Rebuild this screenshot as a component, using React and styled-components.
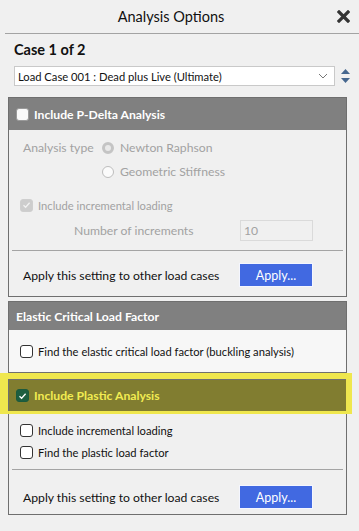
import React from 'react';
import styled, { createGlobalStyle } from 'styled-components';

const GlobalStyle = createGlobalStyle`
  html, body {
    margin: 0;
    padding: 0;
    background: #f0f0f0;
  }
  body {
    font-family: "Lato", "Open Sans", sans-serif;
    color: #111;
  }
`;

const Window = styled.div`
  width: 359px;
  height: 531px;
  background: #f0f0f0;
  overflow: hidden;
`;

const TitleBar = styled.div`
  display: flex;
  align-items: center;
  height: 34px;
  margin-left: 5px;
  border-bottom: 1px solid #a3a3a3;
  box-sizing: border-box;
`;

const Title = styled.div`
  flex: 1;
  text-align: center;
  font-size: 14.5px;
  color: #111;
`;

const CloseBtn = styled.div`
  width: 22px;
  display: flex;
  align-items: center;
  justify-content: flex-start;
`;

const CaseTitle = styled.div`
  font-size: 14.5px;
  font-weight: 700;
  margin: 5px 0 0 14px;
  height: 22px;
  line-height: 22px;
`;

const SelectRow = styled.div`
  display: flex;
  align-items: center;
  margin: 5px 0 0 14px;
  gap: 4px;
`;

const Select = styled.div`
  width: 321px;
  height: 20px;
  box-sizing: border-box;
  background: #fff;
  border: 1px solid #c9c9c9;
  display: flex;
  align-items: center;
  justify-content: space-between;
  padding: 0 6px 0 3px;
  font-size: 11.2px;
  color: #111;
`;

const Spinner = styled.div`
  display: flex;
  flex-direction: column;
  align-items: center;
  gap: 4px;
  width: 12px;
`;

const Panels = styled.div`
  display: flex;
  flex-direction: column;
  margin: 11px 12px 0 8px;
  gap: 4px;
`;

const Panel = styled.div`
  position: relative;
  margin-top: ${p => p.$mt || 0}px;
  border: 1px solid #6f6f6f;
  background: ${p => (p.$light ? '#f7f7f7' : '#f0f0f0')};
`;

const PanelHeader = styled.div`
  display: flex;
  align-items: center;
  gap: 5px;
  height: ${p => p.$h || 32}px;
  padding-left: 7px;
  background: ${p => (p.$hl ? '#817d30' : '#808080')};
  color: ${p => (p.$hl ? '#f2ec52' : '#fff')};
  font-size: 12.2px;
  font-weight: 700;
`;

const Highlight = styled.div`
  position: absolute;
  box-sizing: border-box;
  left: -9px;
  right: -6px;
  top: -7px;
  height: ${p => p.$h}px;
  border: solid #efe74e;
  border-width: 6px 6px 3px 8px;
  pointer-events: none;
`;

const PanelBody = styled.div`
  display: flex;
  flex-direction: column;
  padding: ${p => p.$pad || '0'};
`;

const TypeGrid = styled.div`
  display: grid;
  grid-template-columns: 79px auto;
  row-gap: 5px;
  align-items: center;
  padding: 8px 0 0 14px;
`;

const DimText = styled.span`
  font-size: ${p => p.$fs || 12.2}px;
  color: #a2a2a2;
  line-height: 19px;
`;

const RadioLabel = styled.label`
  display: flex;
  align-items: center;
  gap: 6px;
`;

const Radio = styled.span`
  width: 12px;
  height: 12px;
  box-sizing: border-box;
  border-radius: 50%;
  border: ${p => (p.$on ? '3px solid #c4c4c4' : '1px solid #bdbdbd')};
  background: ${p => (p.$on ? '#e9e9e9' : '#fbfbfb')};
`;

const CheckRow = styled.label`
  display: flex;
  align-items: center;
  gap: 5px;
  height: ${p => p.$h || 22}px;
  margin-top: ${p => p.$mt || 0}px;
  padding-left: 11px;
  font-size: 11.2px;
  color: #111;
`;

const Box = styled.span`
  width: 13px;
  height: 13px;
  box-sizing: border-box;
  border-radius: 3px;
  display: flex;
  align-items: center;
  justify-content: center;
  flex-shrink: 0;
  border: 1px solid ${p => p.$border || '#333'};
  background: ${p => p.$bg || '#fff'};
`;

const IncRow = styled.div`
  display: grid;
  grid-template-columns: 166px 73px;
  align-items: center;
  padding: 4px 0 0 65px;
`;

const NumInput = styled.div`
  height: 21px;
  box-sizing: border-box;
  border: 1px solid #dadada;
  background: #f0f0f0;
  font-size: 12.2px;
  color: #a2a2a2;
  padding-left: 3px;
  line-height: 19px;
`;

const Divider = styled.div`
  height: 1px;
  background: #a4a4a4;
  margin: ${p => p.$mt}px 3px 0 3px;
`;

const ApplyRow = styled.div`
  display: flex;
  align-items: center;
  justify-content: space-between;
  padding: ${p => p.$pt}px 33px ${p => p.$pb}px 14px;
  font-size: 12.2px;
  color: #111;
`;

const ApplyButton = styled.button`
  width: 74px;
  height: 24px;
  border: 1px solid #f4f6ff;
  background: #4169e1;
  color: #fff;
  font-family: "Lato", "Open Sans", sans-serif;
  font-size: 12.5px;
  padding: 0;
`;

const Check = ({ color = '#fff' }) => (
  <svg width="9" height="8" viewBox="0 0 9 8">
    <path d="M1.5 4.2 L3.6 6.2 L7.6 1.8" fill="none" stroke={color} strokeWidth="1.3" />
  </svg>
);

const App = () => (
  <Window>
    <GlobalStyle />
    <TitleBar>
      <Title>Analysis Options</Title>
      <CloseBtn>
        <svg width="13" height="13" viewBox="0 0 13 13">
          <path d="M2 2 L11 11 M11 2 L2 11" stroke="#333" strokeWidth="3.2" strokeLinecap="square" />
        </svg>
      </CloseBtn>
    </TitleBar>

    <CaseTitle>Case 1 of 2</CaseTitle>
    <SelectRow>
      <Select>
        <span>Load Case 001 : Dead plus Live (Ultimate)</span>
        <svg width="10" height="6" viewBox="0 0 10 6">
          <path d="M1 1 L5 5 L9 1" fill="none" stroke="#777" strokeWidth="1" />
        </svg>
      </Select>
      <Spinner>
        <svg width="9" height="5" viewBox="0 0 9 5">
          <path d="M0 5 L4.5 0 L9 5 Z" fill="#46678f" />
        </svg>
        <svg width="9" height="5" viewBox="0 0 9 5">
          <path d="M0 0 L4.5 5 L9 0 Z" fill="#46678f" />
        </svg>
      </Spinner>
    </SelectRow>

    <Panels>
      <Panel>
        <PanelHeader>
          <Box $border="#9a9a9a" $bg="#fafafa" />
          Include P-Delta Analysis
        </PanelHeader>
        <PanelBody>
          <TypeGrid>
            <DimText>Analysis type</DimText>
            <RadioLabel>
              <Radio $on />
              <DimText>Newton Raphson</DimText>
            </RadioLabel>
            <span />
            <RadioLabel>
              <Radio />
              <DimText>Geometric Stiffness</DimText>
            </RadioLabel>
          </TypeGrid>
          <CheckRow $h={22} $mt={13}>
            <Box $border="#cfcfcf" $bg="#cdcdcd">
              <Check color="#f2f2f2" />
            </Box>
            <DimText $fs={11.2}>Include incremental loading</DimText>
          </CheckRow>
          <IncRow>
            <DimText>Number of increments</DimText>
            <NumInput>10</NumInput>
          </IncRow>
          <Divider $mt={9} />
          <ApplyRow $pt={12} $pb={9}>
            <span>Apply this setting to other load cases</span>
            <ApplyButton>Apply...</ApplyButton>
          </ApplyRow>
        </PanelBody>
      </Panel>

      <Panel $light>
        <PanelHeader $h={28}>Elastic Critical Load Factor</PanelHeader>
        <PanelBody $pad="11px 0 10px 0">
          <CheckRow $h={21}>
            <Box />
            Find the elastic critical load factor (buckling analysis)
          </CheckRow>
        </PanelBody>
      </Panel>

      <Panel $mt={2}>
        <PanelHeader $hl $h={31}>
          <Box $border="#1c5a3c" $bg="#1e5e40">
            <Check />
          </Box>
          Include Plastic Analysis
        </PanelHeader>
        <Highlight $h={41} />
        <PanelBody $pad="8px 0 0 0">
          <CheckRow $h={22}>
            <Box />
            Include incremental loading
          </CheckRow>
          <CheckRow $h={22}>
            <Box />
            Find the plastic load factor
          </CheckRow>
          <Divider $mt={6} />
          <ApplyRow $pt={15} $pb={5}>
            <span>Apply this setting to other load cases</span>
            <ApplyButton>Apply...</ApplyButton>
          </ApplyRow>
        </PanelBody>
      </Panel>
    </Panels>
  </Window>
);

export default App;
